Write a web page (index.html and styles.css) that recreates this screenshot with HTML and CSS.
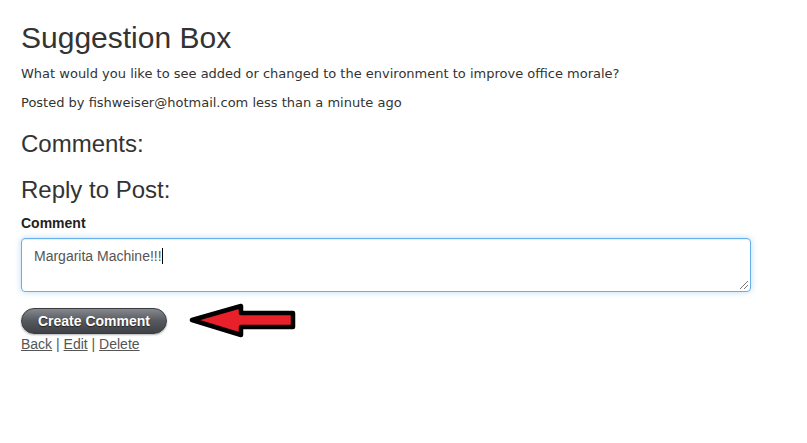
FILE: index.html
```html
<!DOCTYPE html>
<html>
<head>
<meta charset="utf-8">
<link rel="stylesheet" href="styles.css">
</head>
<body>
<div class="page">
  <h1 class="title">Suggestion Box</h1>
  <p class="body-text">What would you like to see added or changed to the environment to improve office morale?</p>
  <p class="body-text">Posted by fishweiser@hotmail.com less than a minute ago</p>
  <h3 class="section">Comments:</h3>
  <h3 class="section reply">Reply to Post:</h3>
  <form class="form">
    <label class="label" for="c">Comment</label>
    <div class="field">
      <div class="textarea" id="c">Margarita Machine!!!<span class="caret"></span></div>
    </div>
    <div class="actions">
      <button type="button" class="btn">Create Comment</button>
    </div>
  </form>
  <div class="links"><a href="#">Back</a> | <a href="#">Edit</a> | <a href="#">Delete</a></div>
  <svg class="arrow" width="115" height="44" viewBox="0 0 115 44">
    <polygon points="6,21 55,7 55,14 107,14 107,28 55,28 55,36" fill="#e8202a" stroke="#000" stroke-width="4.5" stroke-linejoin="round"/>
  </svg>
</div>
</body>
</html>
```

FILE: styles.css
```css
html, body {
  margin: 0;
  padding: 0;
  background: #fff;
}
.page {
  position: relative;
  padding: 21px 0 0 21px;
  width: 730px;
  color: #333;
  font-family: "Liberation Sans", Arial, sans-serif;
}
.title {
  margin: 0;
  font-size: 30px;
  line-height: 33px;
  font-weight: normal;
  color: #333;
}
.body-text {
  margin: 11px 0 0;
  font-family: "DejaVu Sans", Verdana, sans-serif;
  font-size: 13px;
  line-height: 18px;
  color: #333;
}
.body-text + .body-text {
  margin-top: 11px;
}
.section {
  margin: 18px 0 0;
  font-size: 24px;
  line-height: 28px;
  font-weight: normal;
  color: #333;
}
.section.reply {
  margin-top: 18px;
}
.form {
  margin: 0;
}
.label {
  display: block;
  margin-top: 11px;
  font-size: 14px;
  line-height: 16px;
  font-weight: bold;
  color: #222;
}
.field {
  margin-top: 7px;
}
.textarea {
  position: relative;
  box-sizing: border-box;
  width: 730px;
  height: 54px;
  padding: 8px 12px;
  border: 1px solid #66afe9;
  border-radius: 4px;
  box-shadow: inset 0 1px 1px rgba(0,0,0,.075), 0 0 6px rgba(102,175,233,.45);
  font-size: 14px;
  line-height: 18px;
  color: #555;
}
.caret {
  display: inline-block;
  width: 1px;
  height: 16px;
  background: #000;
  vertical-align: -3px;
}
.textarea::after {
  content: "";
  position: absolute;
  right: 2px;
  bottom: 2px;
  width: 8px;
  height: 8px;
  background: linear-gradient(135deg, transparent 45%, #777 45%, #777 55%, transparent 55%, transparent 70%, #777 70%, #777 80%, transparent 80%);
}
.actions {
  margin-top: 16px;
}
.btn {
  display: block;
  box-sizing: border-box;
  width: 146px;
  height: 26px;
  padding: 0;
  border: 1px solid #3a3c3f;
  border-radius: 13px;
  background: linear-gradient(#85888c, #55585c 50%, #3e4145);
  color: #fff;
  font-family: "Liberation Sans", Arial, sans-serif;
  font-size: 14px;
  font-weight: bold;
  text-shadow: 0 1px 1px #222;
  box-shadow: 0 1px 2px rgba(0,0,0,.3);
}
.links {
  margin-top: 1px;
  font-size: 14px;
  line-height: 18px;
  color: #555;
}
.links a {
  color: #555;
  text-decoration: underline;
}
.arrow {
  position: absolute;
  left: 186px;
  top: 299px;
}
```
